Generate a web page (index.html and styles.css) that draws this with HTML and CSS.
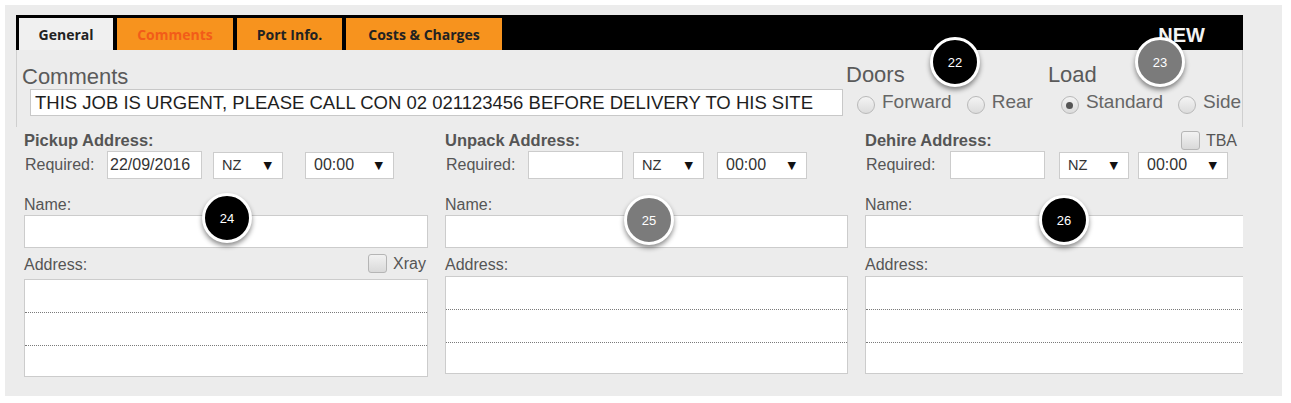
FILE: index.html
```html
<!DOCTYPE html>
<html>
    <head>
        <meta charset="utf-8">
        <title>Job - General</title>
        <link rel="stylesheet" href="styles.css">
    </head>
    <body>
        <div class="panel">
            <div class="form">
                <div class="tabbar">
                    <div class="tab tab-on">General</div>
                    <div class="tab tab-comments">Comments</div>
                    <div class="tab tab-port">Port Info.</div>
                    <div class="tab tab-costs">Costs &amp; Charges</div>
                    <div class="status">NEW</div>
                </div>
                <div class="top-row">
                    <div class="comments">
                        <div class="big-label">Comments</div>
                        <div class="comment-box">THIS JOB IS URGENT, PLEASE CALL CON 02 021123456 BEFORE DELIVERY TO HIS SITE</div>
                    </div>
                    <div class="doors">
                        <div class="big-label">Doors</div>
                        <div class="radios">
                            <span class="radio"></span><span class="radio-text">Forward</span>
                            <span class="radio next"></span><span class="radio-text">Rear</span>
                        </div>
                    </div>
                    <div class="load">
                        <div class="big-label">Load</div>
                        <div class="radios">
                            <span class="radio checked"></span><span class="radio-text">Standard</span>
                            <span class="radio next"></span><span class="radio-text">Side</span>
                        </div>
                    </div>
                </div>
                <div class="columns">
                    <div class="col col-pickup">
                        <div class="col-head"><span class="col-title">Pickup Address:</span></div>
                        <div class="req-row">
                            <span class="req-label">Required:</span>
                            <span class="field date">22/09/2016</span>
                            <span class="field pick nz">NZ<i>▼</i></span>
                            <span class="field pick time">00:00<i>▼</i></span>
                        </div>
                        <div class="small-label">Name:</div>
                        <div class="field name"></div>
                        <div class="addr-head">
                            <span class="small-label">Address:</span>
                            <span class="check-wrap"><span class="check"></span>Xray</span>
                        </div>
                        <div class="addr-box">
                            <div class="addr-line"></div>
                            <div class="addr-line"></div>
                            <div class="addr-line"></div>
                        </div>
                    </div>
                    <div class="col col-unpack">
                        <div class="col-head"><span class="col-title">Unpack Address:</span></div>
                        <div class="req-row">
                            <span class="req-label">Required:</span>
                            <span class="field date"></span>
                            <span class="field pick nz">NZ<i>▼</i></span>
                            <span class="field pick time">00:00<i>▼</i></span>
                        </div>
                        <div class="small-label">Name:</div>
                        <div class="field name"></div>
                        <div class="addr-head">
                            <span class="small-label">Address:</span>
                        </div>
                        <div class="addr-box">
                            <div class="addr-line"></div>
                            <div class="addr-line"></div>
                            <div class="addr-line"></div>
                        </div>
                    </div>
                    <div class="col col-dehire">
                        <div class="col-head">
                            <span class="col-title">Dehire Address:</span>
                            <span class="check-wrap"><span class="check"></span>TBA</span>
                        </div>
                        <div class="req-row">
                            <span class="req-label">Required:</span>
                            <span class="field date"></span>
                            <span class="field pick nz">NZ<i>▼</i></span>
                            <span class="field pick time">00:00<i>▼</i></span>
                        </div>
                        <div class="small-label">Name:</div>
                        <div class="field name"></div>
                        <div class="addr-head">
                            <span class="small-label">Address:</span>
                        </div>
                        <div class="addr-box">
                            <div class="addr-line"></div>
                            <div class="addr-line"></div>
                            <div class="addr-line"></div>
                        </div>
                    </div>
                </div>
            </div>
            <!-- step markers -->
            <div class="badge b22">22</div>
            <div class="badge badge-grey b23">23</div>
            <div class="badge b24">24</div>
            <div class="badge badge-grey b25">25</div>
            <div class="badge b26">26</div>
        </div>
    </body>
</html>
```

FILE: styles.css
```css
body {
    margin: 0;
    background-color: #ffffff;
    font-family: "Liberation Sans", Arial, sans-serif;
    color: #555555;
}
.panel {
    position: relative;
    margin: 5px;
    width: 1277px;
    height: 391px;
    box-sizing: border-box;
    padding: 10px 0 0 11px;
    background-color: #ececec;
}
.form {
    width: 1227px;
    overflow: hidden;
}
.tabbar {
    display: flex;
    align-items: flex-end;
    gap: 4px;
    height: 35px;
    box-sizing: border-box;
    padding-left: 3px;
    background-color: #000000;
}
.tab {
    height: 32px;
    display: flex;
    align-items: center;
    justify-content: center;
    background-color: #f7931e;
    font-family: "Open Sans", sans-serif;
    font-weight: 700;
    font-size: 14px;
    color: #222222;
}
.tab-on {
    width: 94px;
    background-color: #f0f0f0;
}
.tab-comments {
    width: 116px;
    color: #f25c19;
}
.tab-port {
    width: 105px;
}
.tab-costs {
    width: 156px;
}
.status {
    margin-left: auto;
    margin-right: 38px;
    margin-bottom: 5px;
    line-height: 20px;
    font-size: 20px;
    font-weight: 700;
    color: #f4f4f4;
}
.top-row {
    display: flex;
    height: 77px;
    box-sizing: border-box;
    border-left: 1px solid #cfcfcf;
    border-right: 1px solid #cfcfcf;
    padding-left: 5px;
    overflow: hidden;
    white-space: nowrap;
}
.big-label {
    font-size: 22px;
    line-height: 25px;
    color: #5a5a5a;
}
.comments {
    padding-top: 14px;
}
.comment-box {
    margin-left: 8px;
    width: 813px;
    height: 27px;
    box-sizing: border-box;
    padding-left: 4px;
    background-color: #ffffff;
    border: 1px solid #c8c8c8;
    font-size: 18.5px;
    line-height: 25px;
    color: #1e1e1e;
}
.doors {
    margin-left: 3px;
    padding-top: 12px;
}
.load {
    margin-left: 15px;
    padding-top: 12px;
}
.radios {
    display: flex;
    align-items: flex-start;
    margin-top: 5px;
    margin-left: 11px;
}
.load .radios {
    margin-left: 13px;
}
.radio {
    width: 18px;
    height: 18px;
    margin-top: 4px;
    margin-right: 7px;
    box-sizing: border-box;
    border: 1px solid #b9b9b9;
    border-radius: 50%;
    background: linear-gradient(#f4f4f4, #dcdcdc);
    display: flex;
    align-items: center;
    justify-content: center;
}
.radio.next {
    margin-left: 15px;
}
.radio.checked::after {
    content: "";
    width: 7px;
    height: 7px;
    border-radius: 50%;
    background-color: #555555;
}
.radio-text {
    font-size: 19px;
    line-height: 20px;
    color: #666666;
}
.columns {
    display: grid;
    grid-template-columns: 404px 403px 404px;
    column-gap: 17px;
    padding: 4px 0 0 8px;
}
.col-head {
    display: flex;
    align-items: center;
    justify-content: space-between;
    height: 19px;
}
.col-title {
    font-size: 16.5px;
    line-height: 19px;
    font-weight: 700;
    color: #555555;
}
.req-row {
    display: flex;
    align-items: center;
    height: 28px;
    margin-top: 1px;
}
.req-label {
    width: 83px;
    padding-left: 1px;
    box-sizing: border-box;
    font-size: 16px;
    color: #555555;
}
.col-dehire .req-label {
    width: 85px;
}
.field {
    display: flex;
    align-items: center;
    box-sizing: border-box;
    background-color: #ffffff;
    border: 1px solid #cccccc;
    font-size: 16px;
    color: #333333;
}
.date {
    width: 95px;
    height: 28px;
    padding-left: 2px;
}
.pick {
    height: 27px;
    justify-content: space-between;
    padding: 0 10px 0 8px;
}
.pick i {
    font-style: normal;
    font-family: "DejaVu Sans", sans-serif;
    font-size: 11px;
    color: #111111;
}
.nz {
    width: 70px;
    margin-left: 11px;
    font-size: 14.5px;
}
.time {
    width: 89px;
    margin-left: 22px;
}
.col-unpack .nz {
    width: 71px;
    margin-left: 10px;
}
.col-unpack .time {
    width: 90px;
    margin-left: 13px;
}
.col-dehire .nz {
    margin-left: 14px;
}
.col-dehire .time {
    width: 90px;
    margin-left: 9px;
}
.small-label {
    font-size: 16px;
    line-height: 18px;
    color: #555555;
}
.req-row + .small-label {
    margin-top: 17px;
}
.name {
    height: 33px;
    margin-top: 1px;
}
.addr-head {
    display: flex;
    align-items: flex-end;
    justify-content: space-between;
    height: 18px;
    margin-top: 8px;
}
.check-wrap {
    display: flex;
    align-items: center;
    gap: 6px;
    font-size: 16px;
    line-height: 18px;
    color: #555555;
}
.addr-head .check-wrap {
    margin-right: 2px;
    margin-bottom: 1px;
}
.col-dehire .check-wrap {
    margin-right: 32px;
}
.check {
    width: 19px;
    height: 19px;
    box-sizing: border-box;
    border: 1px solid #b5b5b5;
    border-radius: 3px;
    background: linear-gradient(#f2f2f2, #d9d9d9);
}
.addr-box {
    margin-top: 2px;
    height: 98px;
    box-sizing: border-box;
    background-color: #ffffff;
    border: 1px solid #cccccc;
}
.col-pickup .addr-box {
    margin-top: 5px;
}
.addr-line {
    height: 32px;
    border-bottom: 1px dotted #7a7a7a;
}
.addr-line:last-child {
    border-bottom: none;
}
.badge {
    position: absolute;
    width: 44px;
    height: 44px;
    border: 3px solid #ffffff;
    border-radius: 50%;
    background-color: #000000;
    color: #ffffff;
    font-size: 13px;
    display: flex;
    align-items: center;
    justify-content: center;
    box-shadow: 0 3px 5px rgba(0,0,0,0.45);
}
.badge-grey {
    background-color: #7b7b7b;
}
.b22 { left: 925px; top: 32px; }
.b23 { left: 1130px; top: 32px; }
.b24 { left: 197px; top: 188px; }
.b25 { left: 619px; top: 190px; }
.b26 { left: 1034px; top: 190px; }
```
